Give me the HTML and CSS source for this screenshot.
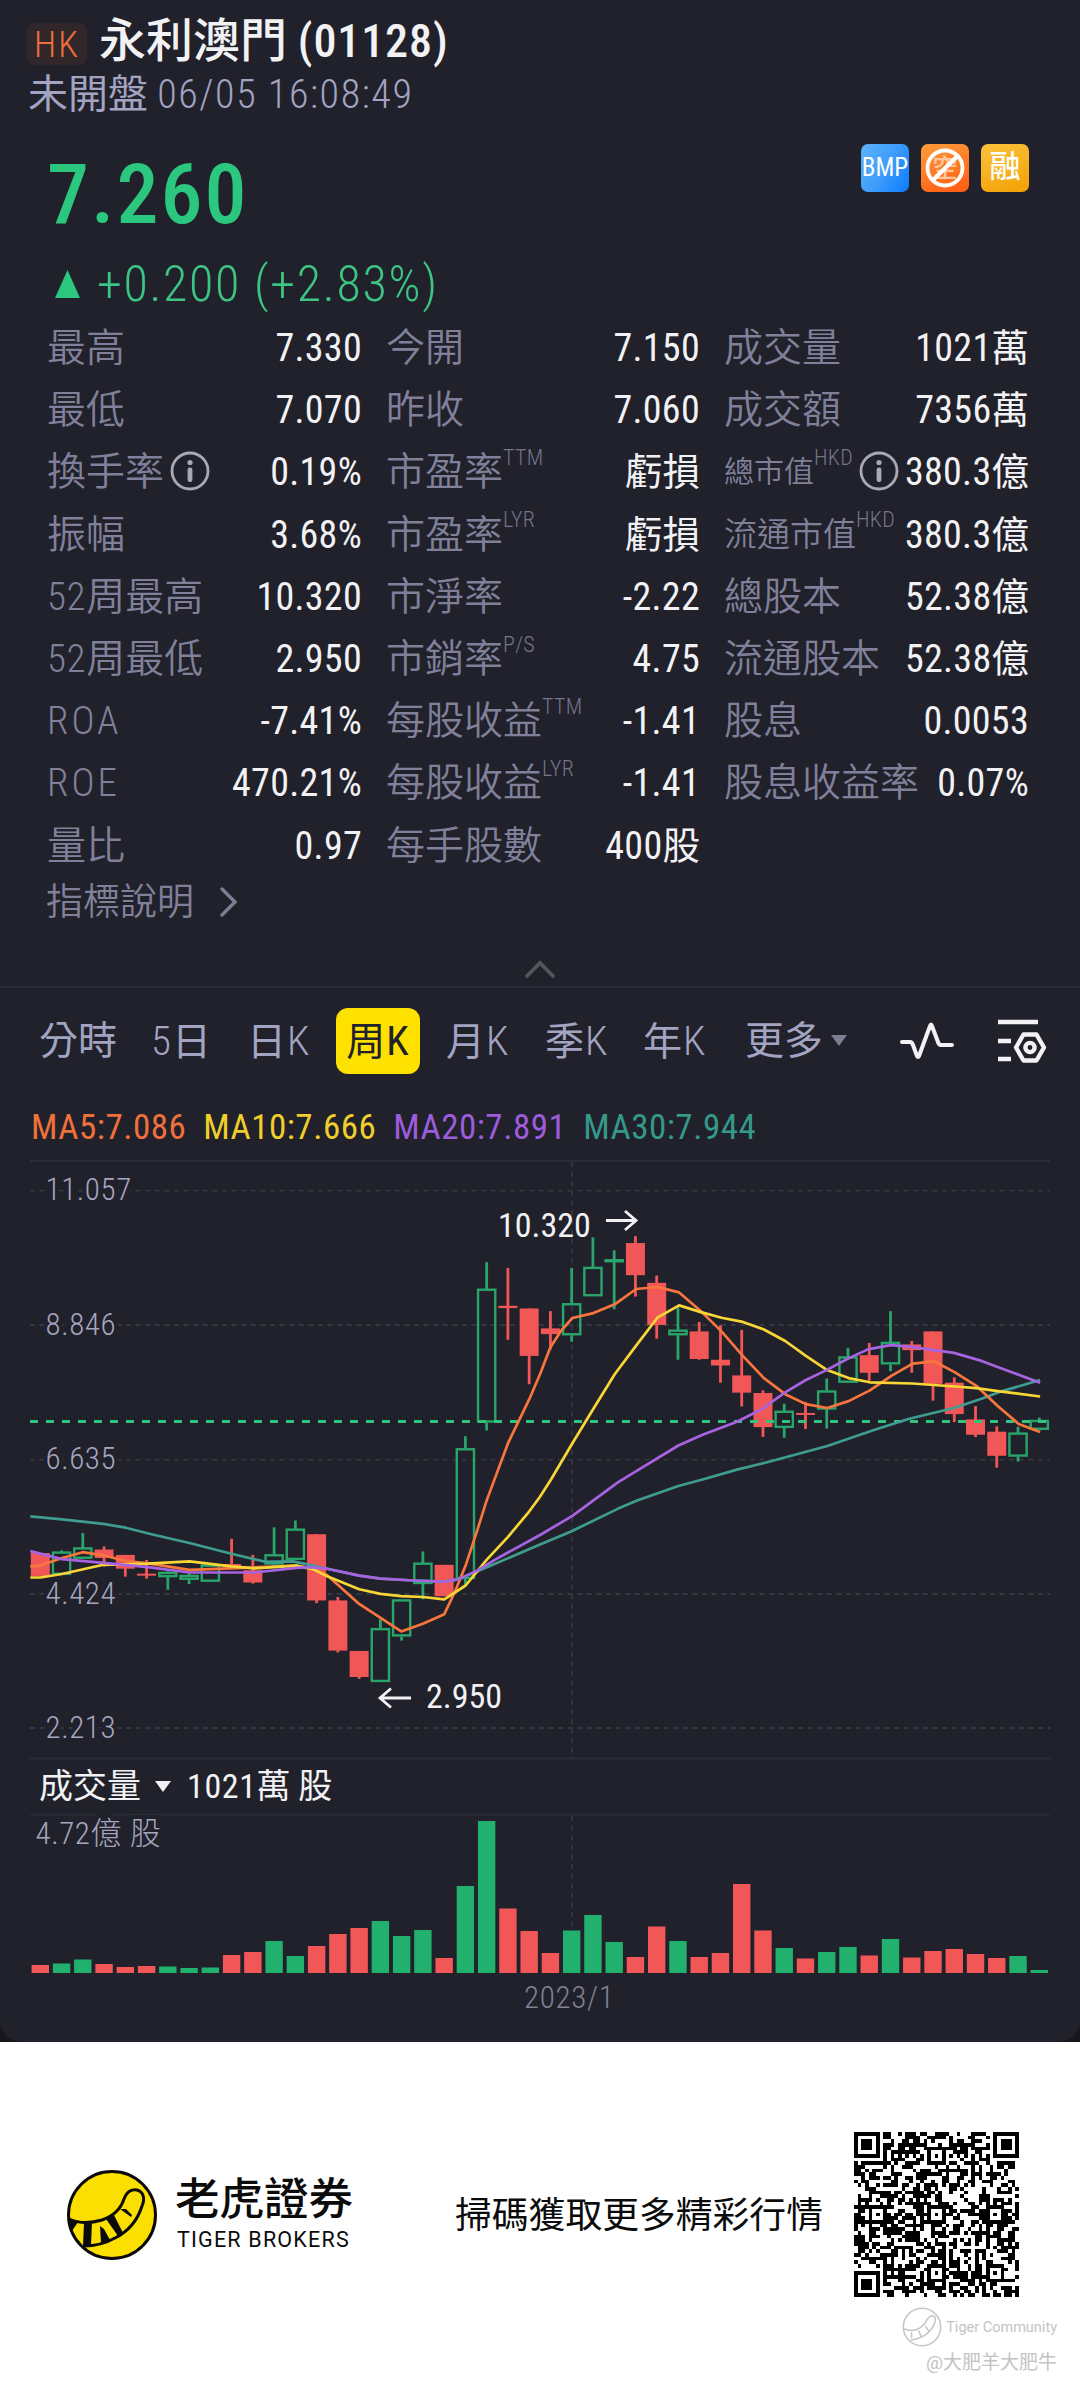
FILE: index.html
```
<!DOCTYPE html>
<html lang="zh-Hant">
<head>
<meta charset="UTF-8">
<meta name="viewport" content="width=device-width, initial-scale=1.0">
<title>永利澳門 (01128)</title>
<link rel="stylesheet" href="styles.css">
</head>
<body>
<div class="wrapper">
    <div class="quote">
        <div class="title">
            <span class="market">HK</span>
            <h1>永利澳門 <span class="code">(01128)</span></h1>
        </div>
        <div class="status">未開盤 <span>06/05 16:08:49</span></div>

        <div class="price-box">
            <div class="price">7.260</div>
            <div class="badges">
                <span class="badge bmp">BMP</span>
                <span class="badge ban">
                    <svg width="48" height="48" viewBox="0 0 48 48">
                        <text x="24" y="33" text-anchor="middle" class="ban-text">空</text>
                        <circle cx="24" cy="24" r="17.5" fill="none" stroke="#fff" stroke-width="3.8"/>
                        <path d="M12.5 35.5 36 12.5" stroke="#fff" stroke-width="4.2"/>
                    </svg>
                </span>
                <span class="badge margin">融</span>
            </div>
        </div>
        <div class="change">
            <svg width="25" height="28" viewBox="0 0 25 28"><path d="M12.5 0 25 28H0z" fill="#2bc77f"/></svg>
            <span>+0.200 (+2.83%)</span>
        </div>

        <div class="stats">
            <div class="col">
                <div class="row"><label>最高</label><b>7.330</b></div>
                <div class="row"><label>最低</label><b>7.070</b></div>
                <div class="row"><label>換手率</label><svg class="info" viewBox="0 0 40 40"><use href="#info"/></svg><b>0.19%</b></div>
                <div class="row"><label>振幅</label><b>3.68%</b></div>
                <div class="row"><label><span>52</span>周最高</label><b>10.320</b></div>
                <div class="row"><label><span>52</span>周最低</label><b>2.950</b></div>
                <div class="row"><label class="en">ROA</label><b>-7.41%</b></div>
                <div class="row"><label class="en">ROE</label><b>470.21%</b></div>
                <div class="row"><label>量比</label><b>0.97</b></div>
            </div>
            <div class="col">
                <div class="row"><label>今開</label><b>7.150</b></div>
                <div class="row"><label>昨收</label><b>7.060</b></div>
                <div class="row"><label>市盈率</label><sup>TTM</sup><b><i>虧損</i></b></div>
                <div class="row"><label>市盈率</label><sup>LYR</sup><b><i>虧損</i></b></div>
                <div class="row"><label>市淨率</label><b>-2.22</b></div>
                <div class="row"><label>市銷率</label><sup>P/S</sup><b>4.75</b></div>
                <div class="row"><label>每股收益</label><sup>TTM</sup><b>-1.41</b></div>
                <div class="row"><label>每股收益</label><sup>LYR</sup><b>-1.41</b></div>
                <div class="row"><label>每手股數</label><b>400<i>股</i></b></div>
            </div>
            <div class="col">
                <div class="row"><label>成交量</label><b>1021<i>萬</i></b></div>
                <div class="row"><label>成交額</label><b>7356<i>萬</i></b></div>
                <div class="row"><label class="small">總市值</label><sup>HKD</sup><svg class="info" viewBox="0 0 40 40"><use href="#info"/></svg><b>380.3<i>億</i></b></div>
                <div class="row"><label class="mid">流通市值</label><sup>HKD</sup><b>380.3<i>億</i></b></div>
                <div class="row"><label>總股本</label><b>52.38<i>億</i></b></div>
                <div class="row"><label>流通股本</label><b>52.38<i>億</i></b></div>
                <div class="row"><label>股息</label><b>0.0053</b></div>
                <div class="row"><label>股息收益率</label><b>0.07%</b></div>
            </div>
        </div>

        <div class="explain">
            <span>指標說明</span>
            <svg width="18" height="30" viewBox="0 0 18 30"><path d="M2 2 15 15 2 28" fill="none" stroke="#7d7d94" stroke-width="3.4" stroke-linecap="round"/></svg>
        </div>
        <div class="fold">
            <svg width="30" height="18" viewBox="0 0 30 18"><path d="M2 16 15 3 28 16" fill="none" stroke="#55555f" stroke-width="3.8" stroke-linecap="round"/></svg>
        </div>

        <div class="tabs">
            <span>分時</span>
            <span><i>5</i>日</span>
            <span>日<i>K</i></span>
            <span class="on">周<i>K</i></span>
            <span>月<i>K</i></span>
            <span>季<i>K</i></span>
            <span>年<i>K</i></span>
            <span class="more">更多<svg width="16" height="11" viewBox="0 0 16 11"><path d="M0 0H16L8 11z" fill="#7d7d94"/></svg></span>
            <svg width="54" height="38" viewBox="0 0 54 38"><path d="M2 20h8q2 0 3 3l4 11q1 2 2 0L30 4q1-3 2 0l6 16q1 3 3 3h11" fill="none" stroke="#f2f2f5" stroke-width="4" stroke-linecap="round" stroke-linejoin="round"/></svg>
            <svg width="50" height="44" viewBox="0 0 50 44"><g fill="none" stroke="#f2f2f5" stroke-width="4.4"><path d="M0 3H40M0 22H13M0 40H13"/><path d="M25.5 15.5H38.5L46 28.5 38.5 41.5H25.5L18 28.5z" stroke-linejoin="round"/><circle cx="32" cy="28.5" r="4.6"/></g></svg>
        </div>
        <div class="ma">
            <span class="ma5">MA5:7.086</span>
            <span class="ma10">MA10:7.666</span>
            <span class="ma20">MA20:7.891</span>
            <span class="ma30">MA30:7.944</span>
        </div>

        <svg class="chart" id="kline" width="1080" height="600" viewBox="0 0 1080 600"></svg>
        <div class="vol-title">
            <span>成交量</span>
            <svg width="16" height="11" viewBox="0 0 16 11"><path d="M0 0H16L8 11z" fill="#f2f2f5"/></svg>
            <span><i>1021</i>萬 股</span>
        </div>
        <svg class="chart" id="volume" width="1080" height="228" viewBox="0 0 1080 228"></svg>
    </div>

    <div class="footer">
        <svg class="logo" width="92" height="92" viewBox="0 0 92 92"><use href="#tiger"/></svg>
        <div class="brand">
            <strong>老虎證券</strong>
            <em>TIGER BROKERS</em>
        </div>
        <div class="scan">掃碼獲取更多精彩行情</div>
        <svg id="qr" width="165" height="165" viewBox="0 0 45 45" shape-rendering="crispEdges"></svg>
        <div class="watermark">
            <div class="community">
                <svg width="40" height="40" viewBox="0 0 92 92"><g fill="none" stroke="#c4c4c4" stroke-width="3.5"><circle cx="46" cy="46" r="43"/><path d="M4 50c18 8 40 4 52-18q6-12 14-12 9 2 6 14C68 58 50 72 20 76M22 58v14M38 54l6 14M54 44l8 12"/></g></svg>
                <span>Tiger Community</span>
            </div>
            <div class="user">@大肥羊大肥牛</div>
        </div>
    </div>
</div>

<svg class="defs" width="0" height="0">
    <defs>
        <g id="info">
            <circle cx="20" cy="20" r="18" fill="none" stroke="#a9a9b6" stroke-width="2.8"/>
            <circle cx="20" cy="11.5" r="2.6" fill="#a9a9b6"/>
            <rect x="17.6" y="16.5" width="4.8" height="14.5" rx="2" fill="#a9a9b6"/>
        </g>
        <g id="tiger">
            <circle cx="46" cy="46" r="43.5" fill="#fbdf00" stroke="#0b0b0b" stroke-width="3"/>
            <path d="M3 50C14 55 26 54 36 51 48 47 55 39 58 30 61 22 66 20 71 21 78 23 79 30 76 37 71 53 61 63 49 69 40 74 28 77 18 77" fill="none" stroke="#0b0b0b" stroke-width="3"/>
            <path d="M3 49 12 53 6 62zM18 54 26 53 25 76 17 77zM34 57 38 60 44 71 35 74zM40 50 48 46 57 64 52 67zM54 40 60 40 66 46 65 48z" fill="#0b0b0b"/>
        </g>
    </defs>
</svg>
<script src="chart.js"></script>
</body>
</html>
```
FILE: styles.css
```
*{
    box-sizing: border-box;
}
body{
    margin:0;
    background:#fff;
    font-family:"Roboto Condensed", "Noto Sans CJK TC", sans-serif;
    color:#f2f2f5;
}
svg{
    display:block;
    flex:none;
}
i{
    font-style:normal;
}
.defs{
    position:absolute;
}
.wrapper{
    width:1080px;
    height:2387px;
    overflow:hidden;
    background:linear-gradient(#16161c 2042px, #fff 2042px);
}
.quote{
    height:2042px;
    background:#20212a;
    border-radius:0 0 22px 22px;
    overflow:hidden;
    padding-top:16px;
}
.title{
    display:flex;
    align-items:center;
    height:50px;
    padding-left:27px;
    gap:12px;
}
.market{
    width:60px;
    height:42px;
    margin-top:6px;
    border-radius:7px;
    background:#31272b;
    color:#ef6f3c;
    font-size:36px;
    font-weight:300;
    line-height:44px;
    text-align:center;
    letter-spacing:2px;
}
h1{
    margin:0;
    font-size:47px;
    font-weight:500;
    line-height:46px;
    white-space:nowrap;
}
.code{
    font-size:46px;
    letter-spacing:.9px;
}
.status{
    height:48px;
    margin-top:4px;
    padding-left:28px;
    font-size:40px;
    line-height:49px;
    font-weight:400;
    color:#a3a3c2;
}
.status span{
    font-weight:300;
    letter-spacing:1.6px;
}
.price-box{
    display:flex;
    justify-content:space-between;
    height:84px;
    margin-top:35px;
    padding:0 51px 0 47px;
}
.price{
    font-size:84px;
    line-height:84px;
    font-weight:500;
    letter-spacing:2px;
    color:#2bc77f;
}
.badges{
    display:flex;
    gap:12px;
    margin-top:-9px;
}
.badge{
    width:48px;
    height:48px;
    border-radius:7px;
    text-align:center;
    line-height:48px;
    color:#fff;
    overflow:hidden;
}
.bmp{
    background:linear-gradient(120deg, #5cb2fa, #3f9dfb 50%, #0b7cff);
    font-size:25px;
    font-weight:400;
}
.ban{
    background:linear-gradient(160deg, #ff9d3c, #ff5a12);
}
.ban-text{
    font-size:25px;
    font-weight:500;
    fill:#ffc79c;
}
.margin{
    background:linear-gradient(160deg, #fbc23c, #f2a104);
    font-size:31px;
    line-height:46px;
    font-weight:500;
}
.change{
    display:flex;
    align-items:center;
    height:50px;
    margin-top:22px;
    padding-left:55px;
    gap:17px;
    font-size:50px;
    line-height:50px;
    font-weight:300;
    letter-spacing:1.7px;
    color:#3cc584;
}
.stats{
    display:grid;
    grid-template-columns:315px 314px 305px;
    gap:24px;
    margin-top:7px;
    padding-left:47px;
}
.row{
    display:flex;
    align-items:center;
    height:62.2px;
    line-height:42px;
    white-space:nowrap;
}
.row label{
    height:40px;
    font-size:39px;
    font-weight:350;
    color:#80809a;
}
.row label span{
    letter-spacing:.6px;
    font-weight:300;
}
.row label.en{
    font-weight:300;
    letter-spacing:3px;
}
.row label.small{
    font-size:30px;
}
.row label.mid{
    font-size:33px;
}
.row sup{
    margin:-27px 0 0 0;
    font-size:22px;
    line-height:24px;
    font-weight:300;
    letter-spacing:.3px;
    color:#75758c;
}
.row b{
    height:40px;
    margin-left:auto;
    font-size:38px;
    font-weight:400;
    letter-spacing:.3px;
}
.row b i{
    font-size:37.5px;
    letter-spacing:0;
}
.info{
    width:40px;
    height:40px;
    margin-left:6px;
}
.explain{
    display:flex;
    align-items:center;
    height:44px;
    margin-top:4px;
    padding-left:46px;
    gap:26px;
    font-size:37px;
    line-height:41px;
    font-weight:350;
    color:#80809a;
}
.explain span{
    height:40px;
}
.fold{
    display:flex;
    justify-content:center;
    height:64px;
    padding-top:36px;
    border-bottom:2px solid #292a33;
}
.tabs{
    display:grid;
    grid-template-columns:111px 97px 89px 110px 99px 98px 102px 155px 98px 50px;
    align-items:center;
    height:66px;
    margin-top:20px;
    padding-left:39px;
    font-size:39px;
    line-height:40px;
    font-weight:400;
    color:#a3a3c2;
    white-space:nowrap;
}
.tabs span{
    height:40px;
}
.tabs i{
    margin-left:1px;
    font-size:41px;
    font-weight:300;
    letter-spacing:1px;
}
.tabs .on{
    width:84px;
    height:66px;
    border-radius:12px;
    background:#ffe100;
    color:#20212a;
    line-height:66px;
    text-align:center;
}
.tabs .on i{
    font-weight:400;
}
.more{
    display:flex;
    align-items:center;
    gap:8px;
}
.ma{
    display:flex;
    height:40px;
    margin:33px 0 13px;
    padding-left:31px;
    gap:17px;
    font-size:35px;
    line-height:41px;
    font-weight:400;
    letter-spacing:.5px;
}
.ma5{ color:#f0703c; }
.ma10{ color:#f0cf2c; }
.ma20{ color:#9d5cdb; }
.ma30{ color:#35998a; }
.vol-title{
    display:flex;
    align-items:center;
    height:54px;
    padding-left:39px;
    gap:14px;
    font-size:34px;
    line-height:34px;
}
.vol-title span{
    height:36px;
}
.vol-title svg{
    margin-right:2px;
}
.vol-title i{
    letter-spacing:.6px;
}
.chart .axis{
    font-size:31px;
    font-weight:300;
    letter-spacing:.6px;
    fill:#a6a6c0;
    stroke:#20212a;
    stroke-width:8px;
    paint-order:stroke;
}
.chart .mark{
    font-size:34px;
    fill:#f2f2f5;
}
.chart .date{
    font-size:31px;
    font-weight:300;
    letter-spacing:.7px;
    fill:#808096;
}

.footer{
    display:grid;
    grid-template-columns:109px 280px 399px 165px;
    grid-template-rows:165px 1fr;
    align-items:center;
    height:345px;
    padding:90px 0 0 66px;
    color:#0b0b0b;
}
.brand strong{
    display:block;
    font-size:44.5px;
    line-height:52px;
    height:50px;
    font-weight:500;
}
.brand em{
    display:block;
    margin-left:2px;
    font-family:Roboto;
    font-size:21.5px;
    font-style:normal;
    line-height:32px;
    letter-spacing:1.2px;
}
.scan{
    height:42px;
    font-size:36.8px;
    line-height:43px;
}
.watermark{
    grid-column:1 / -1;
    align-self:start;
    justify-self:end;
    margin:10px -38px 0 0;
    font-family:Roboto, "Noto Sans CJK TC", sans-serif;
    color:#c4c4c4;
    text-align:right;
}
.community{
    display:flex;
    align-items:center;
    justify-content:flex-end;
    gap:4px;
    font-size:14.5px;
}
.user{
    margin-top:5px;
    font-size:19px;
    line-height:22px;
}
```
FILE: chart.js
```
var SVG_NS = "http://www.w3.org/2000/svg";
var GREEN = "#22b06e", LINE_GREEN = "#29a56b", RED = "#f25757", GRID = "#363740";
var START = 40.3, STEP = 21.255;   // center of the first candle, distance between candles
var SX = 540 / 1568, SY = 600 / 1568;   // plot units -> px

function add(parent, name, attrs, text){
    var el = document.createElementNS(SVG_NS, name);
    for(var key in attrs){
        el.setAttribute(key, attrs[key]);
    }
    if(text) el.textContent = text;
    parent.appendChild(el);
    return el;
}
function line(parent, x1, y1, x2, y2, color, width, dash){
    add(parent, "line", {x1:x1, y1:y1, x2:x2, y2:y2, stroke:color, "stroke-width":width, "stroke-dasharray":dash || "none"});
}

// high, body top, body bottom, low (g = rising week, r = falling week)
var candles = [
    ["r",1027,1027,1087,1087],["g",1020,1026,1084,1084],["g",975,1015,1042,1042],["r",1010,1018,1040,1062],
    ["r",1032,1032,1068,1089],["r",1045,1081,1086,1094],["g",1075,1079,1090,1123],["g",1080,1087,1097,1108],
    ["g",1060,1060,1102,1102],["r",990,1056,1064,1064],["r",1032,1072,1104,1107],["g",960,1033,1057,1062],
    ["g",942,966,1045,1045],["r",978,978,1151,1158],["r",1142,1151,1282,1287],["r",1283,1283,1351,1356],
    ["g",1200,1226,1364,1364],["g",1151,1151,1245,1256],["g",1023,1055,1108,1148],["r",1058,1058,1140,1140],
    ["g",722,756,1095,1110],["g",267,339,686,707],["r",282,381,387,470],["r",388,388,512,586],
    ["r",395,440,455,495],["g",282,377,458,475],["g",202,282,356,356],["g",236,262,267,390],
    ["r",199,217,301,357],["r",302,321,431,467],["g",385,446,458,522],["r",423,448,520,522],
    ["r",432,522,537,582],["r",444,563,608,644],["r",602,609,698,724],["g",637,658,700,726],
    ["r",632,661,666,703],["g",571,605,652,702],["g",491,516,582,582],["r",478,510,556,577],
    ["g",395,478,534,552],["r",473,482,497,556],["r",448,448,585,629],["r",568,582,664,685],
    ["r",643,678,718,724],["r",696,710,773,804],["g",697,715,775,788],["g",673,682,705,705]
];
var averages = {
    "#3f9c91":"88,931 180,939 300,951 365,961 440,978 550,1001 672,1029 770,1050 850,1049 890,1056 950,1068 1043,1086 1105,1094 1200,1099 1290,1102 1330,1096 1385,1075 1568,1005 1660,970 1795,911 1850,890 1970,852 2040,835 2140,809 2210,794 2400,748 2540,705 2640,676 2770,648 2850,624 2910,604 3020,575",
    "#f8763d":"88,1062 117,1060 180,1040 240,1025 300,1033 365,1048 430,1054 550,1071 672,1067 860,1060 910,1068 950,1085 1043,1160 1165,1232 1228,1212 1290,1187 1320,1130 1352,1060 1385,970 1413,890 1475,740 1537,625 1568,560 1598,490 1630,445 1662,413 1723,400 1785,377 1847,337 1909,332 1972,346 2033,393 2095,448 2157,512 2218,570 2280,612 2340,638 2402,648 2464,630 2526,602 2588,564 2650,532 2712,526 2773,555 2835,590 2897,643 2958,690 3020,711",
    "#f8d636":"88,1091 117,1091 180,1082 300,1058 430,1055 550,1049 672,1062 740,1067 860,1060 910,1070 950,1088 1043,1122 1105,1134 1165,1140 1228,1142 1290,1148 1352,1112 1413,1045 1475,985 1537,918 1568,880 1600,835 1662,740 1723,650 1785,560 1847,485 1909,412 1972,380 2033,397 2095,412 2157,423 2218,443 2280,473 2340,512 2402,549 2464,570 2526,581 2650,584 2773,592 2835,596 2897,604 3020,618",
    "#a763e0":"88,1022 180,1043 300,1053 430,1064 550,1078 620,1078 740,1078 860,1066 900,1064 950,1068 1043,1086 1105,1094 1200,1099 1290,1102 1330,1096 1385,1073 1450,1038 1568,980 1662,930 1795,842 1850,812 1970,746 2040,718 2140,684 2210,652 2280,607 2340,575 2400,549 2460,520 2520,495 2585,484 2640,488 2770,504 2850,525 2930,552 3020,582"
};
// bar heights in px
var volumes = [8,9.5,13.5,9,6,7,6.5,5,5.5,18,21,32,17,27,39,45,52,37,43,15,87,152,64.5,42,20,42.5,58,31,16,46.5,32,16,20,89,42.5,25,14.5,21,26,17.5,34,15.5,22,24,19,15,17,3];

function drawKline(){
    var svg = document.getElementById("kline");
    line(svg, 30, 1, 1050, 1, "#2b2c35", 2);
    line(svg, 30, 598.5, 1050, 598.5, "#2b2c35", 2);
    line(svg, 572, 2, 572, 598, GRID, 1.8, "5 4.6");
    [["11.057",30.6],["8.846",165],["6.635",299.7],["4.424",434],["2.213",568]].forEach(function(g){
        line(svg, 30, g[1], 1050, g[1], GRID, 1.8, "5 4.6");
        add(svg, "text", {x:45.5, y:g[1] + 9.5, "class":"axis"}, g[0]);
    });
    candles.forEach(function(c, i){
        var x = START + STEP * i, high = c[1] * SY, top = c[2] * SY, bottom = c[3] * SY, low = c[4] * SY;
        if(c[0] == "r"){
            line(svg, x, high, x, low, RED, 2.8);
            add(svg, "rect", {x:x - 9.5, y:top, width:19, height:Math.max(bottom - top, 2), fill:RED});
        }else{
            line(svg, x, high, x, top, LINE_GREEN, 2.8);
            line(svg, x, bottom, x, low, LINE_GREEN, 2.8);
            add(svg, "rect", {x:x - 8.6, y:top, width:17.2, height:Math.max(bottom - top - 1, 1), fill:"none", stroke:LINE_GREEN, "stroke-width":2.4});
        }
    });
    line(svg, 30, 261.4, 1050, 261.4, "#35c27d", 3, "8 8");
    for(var color in averages){
        var points = averages[color].split(" ").map(function(p){
            var xy = p.split(",");
            return (xy[0] * SX).toFixed(1) + "," + (xy[1] * SY).toFixed(1);
        }).join(" ");
        add(svg, "polyline", {points:points, fill:"none", stroke:color, "stroke-width":2.7, "stroke-linejoin":"round"});
    }
    add(svg, "text", {x:498, y:76.5, "class":"mark"}, "10.320");
    add(svg, "path", {d:"M606 60.5H636M625 51 636 60.5 625 70", fill:"none", stroke:"#f2f2f5", "stroke-width":2.8});
    add(svg, "text", {x:426, y:548, "class":"mark"}, "2.950");
    add(svg, "path", {d:"M411 538H380M391 528.5 380 538 391 547.5", fill:"none", stroke:"#f2f2f5", "stroke-width":2.8});
}

function drawVolume(){
    var svg = document.getElementById("volume");
    line(svg, 30, 0.5, 1050, 0.5, "#2b2c35", 2);
    line(svg, 572, 2, 572, 158, GRID, 1.8, "5 4.6");
    volumes.forEach(function(v, i){
        add(svg, "rect", {x:START + STEP * i - 8.7, y:159 - v, width:17.4, height:v, fill:candles[i][0] == "r" ? RED : GREEN});
    });
    add(svg, "text", {x:35.5, y:30, "class":"axis"}, "4.72億 股");
    add(svg, "text", {x:524, y:194, "class":"date"}, "2023/1");
}

function drawQr(){
    var svg = document.getElementById("qr"), size = 45, seed = 1128, d = "";
    function distance(x, y, p){
        return Math.max(Math.abs(x - p[0]), Math.abs(y - p[1]));
    }
    for(var y = 0; y < size; y++){
        for(var x = 0; x < size; x++){
            seed = (seed * 16807) % 2147483647;
            var dark = seed / 2147483647 < 0.54;
            if(x == 6 || y == 6) dark = (x + y) % 2 == 0;
            [[6,22],[22,6],[22,22],[38,22],[22,38],[38,38]].forEach(function(p){
                var k = distance(x, y, p);
                if(k <= 2) dark = k != 1;
            });
            [[3,3],[41,3],[3,41]].forEach(function(p){
                var k = distance(x, y, p);
                if(k <= 4) dark = k < 2 || k == 3;
            });
            if(dark) d += "M" + x + " " + y + "h1v1h-1z";
        }
    }
    add(svg, "path", {d:d, fill:"#000"});
}

drawKline();
drawVolume();
drawQr();
```
